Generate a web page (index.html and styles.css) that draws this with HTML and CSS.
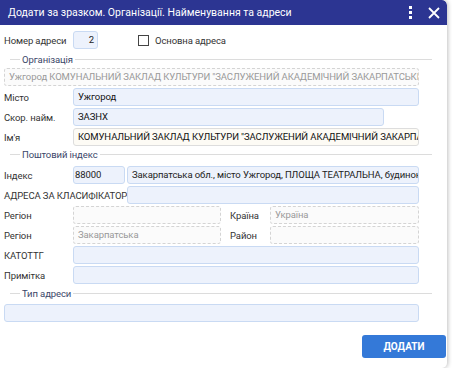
FILE: index.html
```html
<!DOCTYPE html>
<html lang="uk">
<head>
    <meta charset="UTF-8">
    <title>Додати за зразком</title>
    <link rel="stylesheet" href="styles.css">
</head>
<body>
<div class="dialog">
    <header class="title-bar">
        <h1>Додати за зразком. Організації. Найменування та адреси</h1>
        <span class="kebab"><i></i><i></i><i></i></span>
        <svg class="close" width="12" height="12" viewBox="0 0 12 12"><path d="M1 1L11 11M11 1L1 11" stroke="#fff" stroke-width="1.8"/></svg>
    </header>

    <div class="content">
        <div class="row top-row">
            <span class="label">Номер адреси</span>
            <span class="field num">2</span>
            <label class="check"><span class="box"></span>Основна адреса</label>
        </div>

        <div class="legend legend-org"><span>Організація</span></div>
        <div class="row"><span class="field dashed full">Ужгород КОМУНАЛЬНИЙ ЗАКЛАД КУЛЬТУРИ "ЗАСЛУЖЕНИЙ АКАДЕМІЧНИЙ ЗАКАРПАТСЬКИЙ НАРОДНИЙ ХОР"</span></div>
        <div class="row"><span class="label">Місто</span><span class="field strong wide">Ужгород</span></div>
        <div class="row"><span class="label">Скор. найм.</span><span class="field strong short">ЗАЗНХ</span></div>
        <div class="row"><span class="label">Ім'я</span><span class="field cream wide">КОМУНАЛЬНИЙ ЗАКЛАД КУЛЬТУРИ "ЗАСЛУЖЕНИЙ АКАДЕМІЧНИЙ ЗАКАРПАТСЬКИЙ НАРОДНИЙ ХОР"</span></div>

        <div class="legend legend-post"><span>Поштовий індекс</span></div>
        <div class="row">
            <span class="label">Індекс</span>
            <span class="field zip">88000</span>
            <span class="field addr">Закарпатська обл., місто Ужгород, ПЛОЩА ТЕАТРАЛЬНА, будинок 8</span>
        </div>
        <div class="row"><span class="label label-long">АДРЕСА ЗА КЛАСИФІКАТОР</span><span class="field addr"></span></div>
        <div class="row">
            <span class="label">Регіон</span><span class="field dashed half"></span>
            <span class="label label-mid">Країна</span><span class="field dashed half2">Україна</span>
        </div>
        <div class="row">
            <span class="label">Регіон</span><span class="field dashed half">Закарпатська</span>
            <span class="label label-mid">Район</span><span class="field dashed half2"></span>
        </div>
        <div class="row"><span class="label">КАТОТТГ</span><span class="field wide"></span></div>
        <div class="row"><span class="label">Примітка</span><span class="field wide"></span></div>

        <div class="legend legend-type"><span>Тип адреси</span></div>
        <div class="row"><span class="field full"></span></div>

        <div class="actions"><button class="btn">ДОДАТИ</button></div>
    </div>
</div>
</body>
</html>
```

FILE: styles.css
```css
* { box-sizing: border-box; }
:root {
    --navy: #2c3592;
    --field-bg: #edf2fc;
    --field-border: #c9daf3;
    --line: #dcdcdc;
    --font: Roboto, "Liberation Sans", sans-serif;
}
body {
    margin: 0;
    background: #fff;
    font-family: var(--font);
    font-size: 9.5px;
    letter-spacing: -0.1px;
    color: #333;
}
.dialog {
    width: 447px;
    height: 368px;
    background: #fff;
    border-radius: 0 5px 5px 0;
    box-shadow: 1px 0 4px rgba(0, 0, 0, 0.25);
    overflow: hidden;
}

.title-bar {
    height: 25px;
    background: var(--navy);
    display: flex;
    align-items: center;
    padding: 0 5px 0 8px;
    border-radius: 0 5px 0 0;
}
.title-bar h1 {
    flex: 1;
    margin: 0;
    color: #fff;
    font-size: 10.5px;
    font-weight: normal;
    letter-spacing: 0;
    white-space: nowrap;
}
.kebab {
    display: flex;
    flex-direction: column;
    gap: 2px;
    margin-right: 16px;
}
.kebab i {
    width: 3px;
    height: 3px;
    background: #fff;
}
.close { margin-right: 2px; }

.content { padding: 0 4px; }

.row {
    display: flex;
    align-items: center;
    height: 18px;
    margin-top: 2px;
}
.top-row { margin-top: 6px; }
.label {
    width: 69px;
    flex-shrink: 0;
    white-space: nowrap;
}
.label-long { width: 123px; }
.label-mid { width: 49px; padding-left: 9px; }

.field {
    height: 18px;
    line-height: 16px;
    padding: 0 4px;
    border: 1px solid var(--field-border);
    border-radius: 3px;
    background: var(--field-bg);
    color: #222;
    white-space: nowrap;
    overflow: hidden;
}
.field.strong { color: #111; }
.field.cream {
    background: #fdfbf5;
    border-color: #ddd;
    color: #111;
}
.field.dashed {
    background: #fbfbfb;
    border: 1px dashed #d4d4d4;
    color: #999;
}
.num { width: 25px; text-align: right; padding-right: 3px; }
.full { width: 415px; }
.wide { width: 346px; }
.short { width: 311px; }
.zip { width: 52px; margin-right: 2px; padding-left: 1px; }
.addr { width: 292px; }
.half { width: 148px; }
.half2 { width: 149px; }

.check {
    display: flex;
    align-items: center;
    margin-left: 40px;
    color: #333;
}
.box {
    width: 11px;
    height: 11px;
    border: 1.5px solid #444;
    margin-right: 6px;
}

.legend {
    display: flex;
    align-items: center;
    height: 14px;
    color: #3a4668;
}
.legend::before {
    content: "";
    width: 10px;
    border-top: 1px solid var(--line);
    margin: 0 2px 0 6px;
}
.legend::after {
    content: "";
    flex: 1;
    border-top: 1px solid var(--line);
    margin: 0 11px 0 2px;
}
.legend-org { margin-top: 3px; margin-bottom: 2px; }
.legend-post { margin-top: 1px; margin-bottom: 5px; }
.legend-type { margin-top: 2px; margin-bottom: 4px; }

.actions {
    display: flex;
    justify-content: flex-end;
    margin-top: 13px;
}
.btn {
    width: 84px;
    height: 23px;
    border: none;
    border-radius: 3px;
    background: #3479d8;
    color: #fff;
    font-family: var(--font);
    font-size: 10px;
    font-weight: bold;
    margin-right: -3px;
}
```
